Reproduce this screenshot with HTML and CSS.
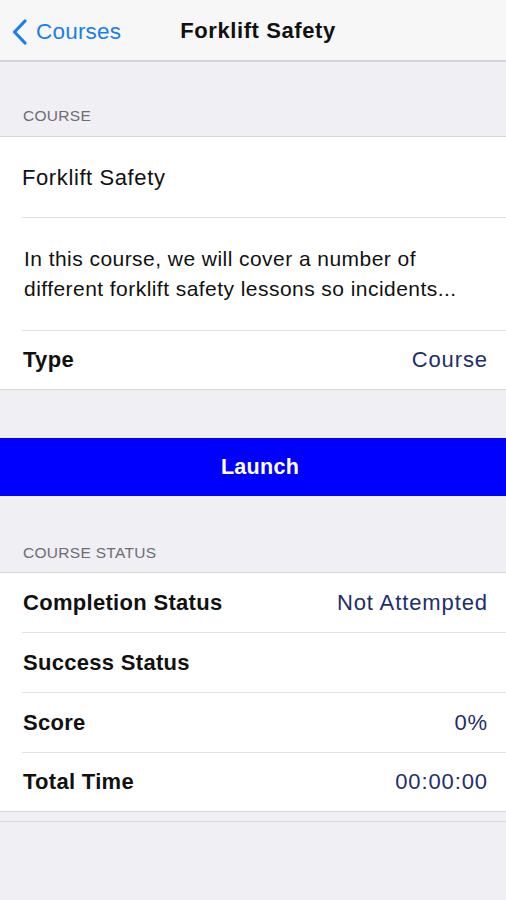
FILE: index.html
```html
<!DOCTYPE html>
<html>
<head>
<meta charset="utf-8">
<link rel="stylesheet" href="styles.css">
</head>
<body>
<header class="navbar">
  <div class="back">
    <svg class="chev" width="17" height="26" viewBox="0 0 17 26"><path d="M14 2 L3.5 13 L14 24" fill="none" stroke="#1a7ef0" stroke-width="3.2" stroke-linecap="round" stroke-linejoin="round"/></svg>
    <span>Courses</span>
  </div>
  <div class="title">Forklift Safety</div>
</header>

<div class="section-head first">COURSE</div>
<div class="group">
  <div class="row name-row"><span class="plain">Forklift Safety</span></div>
  <div class="row desc-row"><p class="desc">In this course, we will cover a number of different forklift safety lessons so incidents...</p></div>
  <div class="row kv last"><span class="label">Type</span><span class="value">Course</span></div>
</div>

<div class="launch">Launch</div>

<div class="section-head">COURSE STATUS</div>
<div class="group">
  <div class="row kv"><span class="label">Completion Status</span><span class="value">Not Attempted</span></div>
  <div class="row kv"><span class="label">Success Status</span><span class="value"></span></div>
  <div class="row kv"><span class="label">Score</span><span class="value">0%</span></div>
  <div class="row kv last"><span class="label">Total Time</span><span class="value">00:00:00</span></div>
</div>
<div class="footer-line"></div>
</body>
</html>
```

FILE: styles.css
```css
* { box-sizing: border-box; }
html, body { margin: 0; padding: 0; }
body {
  background: #efeff4;
  font-family: "Liberation Sans", Arial, sans-serif;
  color: #111;
  width: 506px;
  min-height: 900px;
}
.navbar {
  height: 62px;
  background: #f7f7f8;
  border-bottom: 2px solid #d4d4d8;
  display: flex;
  align-items: center;
  position: relative;
}
.back {
  display: flex;
  align-items: center;
  gap: 8px;
  padding-left: 11px;
  padding-top: 3px;
  color: #1a7ef0;
  font-size: 22.5px;
  letter-spacing: 0.2px;
}
.chev { display: block; }
.title {
  position: absolute;
  left: 0; right: 0;
  top: 0; bottom: 0;
  display: flex;
  align-items: center;
  justify-content: center;
  font-weight: bold;
  font-size: 22px;
  letter-spacing: 0.6px;
  padding-left: 10px;
  padding-top: 1px;
  pointer-events: none;
}
.section-head {
  color: #6d6d72;
  font-size: 15.5px;
  letter-spacing: 0.3px;
  padding: 0 0 10px 23px;
  height: 76px;
  display: flex;
  align-items: flex-end;
}
.section-head.first { height: 74px; padding-bottom: 11px; }
.group {
  background: #fff;
  border-top: 1px solid #d8d8dc;
  border-bottom: 1px solid #d8d8dc;
}
.row {
  margin-left: 22px;
  padding-right: 18px;
  border-bottom: 1.5px solid #e2e2e6;
  display: flex;
  align-items: center;
}
.row.last { border-bottom: none; }
.name-row { height: 81px; padding-top: 1px; }
.plain { font-size: 22px; letter-spacing: 0.6px; }
.desc-row { height: 113px; }
.desc {
  margin: 0;
  font-size: 21px;
  line-height: 30px;
  padding-left: 2px;
  letter-spacing: 0.45px;
}
.kv { height: 60px; justify-content: space-between; padding-left: 1px; }
.kv.last { height: 58px; }
.label { font-weight: bold; font-size: 22px; letter-spacing: 0.3px; }
.value { color: #222d6c; font-size: 22px; letter-spacing: 0.9px; }
.launch {
  margin-top: 48px;
  height: 58px;
  background: #0000fe;
  color: #fff;
  font-weight: bold;
  font-size: 21.5px;
  letter-spacing: 0.3px;
  display: flex;
  align-items: center;
  justify-content: center;
  padding-left: 14px;
  padding-top: 1px;
}
.footer-line {
  margin-top: 9px;
  border-top: 1px solid #d8d8dc;
}
```
